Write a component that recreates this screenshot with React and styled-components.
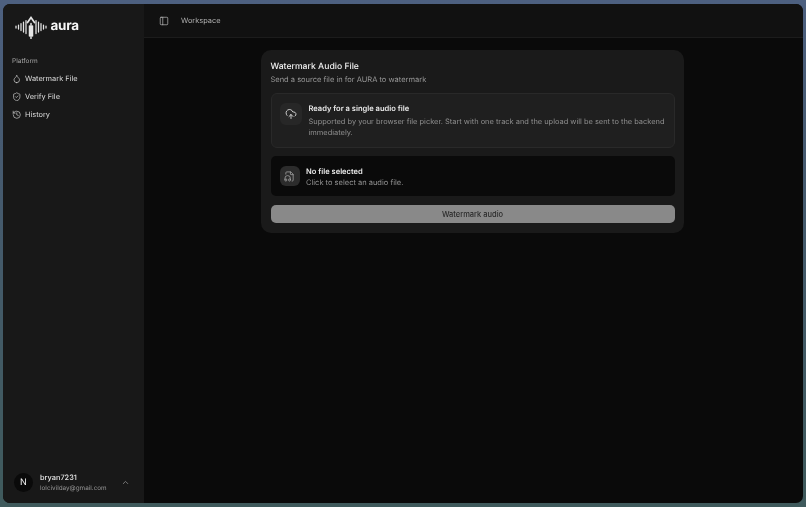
import React from "react";
import styled, { createGlobalStyle } from "styled-components";
import { Droplet, ShieldCheck, History, PanelLeft, CloudUpload, FileAudio, ChevronUp } from "lucide-react";

const Global = createGlobalStyle`
  html, body { margin: 0; padding: 0; background: #3f5560; }
  * { box-sizing: border-box; }
  body { font-family: Inter, "Liberation Sans", sans-serif; text-rendering: geometricPrecision; }
`;

const Desktop = styled.div`
  width: 806px;
  height: 507px;
  padding: 4px 3px 4px 3px;
  background: linear-gradient(180deg, #4d6080 0%, #465a70 30%, #3f5a5c 100%);
  overflow: hidden;
  filter: blur(0.3px);
`;

const Window = styled.div`
  display: flex;
  height: 100%;
  border-radius: 7px;
  overflow: hidden;
  background: #0a0a0a;
`;

const Sidebar = styled.aside`
  display: flex;
  flex-direction: column;
  width: 141px;
  flex: none;
  background: #181818;
`;

const Brand = styled.div`
  display: flex;
  align-items: center;
  gap: 2.5px;
  height: 44px;
  padding: 2px 0 0 11px;
`;

const BrandName = styled.span`
  color: #f6f6f6;
  font-size: 13.4px;
  font-weight: 700;
  letter-spacing: -0.2px;
  line-height: 1;
`;

const SectionLabel = styled.div`
  margin-top: 8px;
  padding-left: 9px;
  color: #a4a4a4;
  font-size: 6.5px;
  line-height: 10px;
`;

const Nav = styled.nav`
  display: flex;
  flex-direction: column;
  margin-top: 4px;
`;

const NavItem = styled.a`
  display: flex;
  align-items: center;
  gap: 4px;
  height: 17.8px;
  padding-left: 8.5px;
  color: #dcdcdc;
  font-size: 7.4px;
  line-height: 1;
  svg { flex: none; }
`;

const UserRow = styled.div`
  display: flex;
  align-items: center;
  margin-top: auto;
  height: 42px;
  padding: 0 14px 0 11px;
`;

const Avatar = styled.div`
  display: flex;
  align-items: center;
  justify-content: center;
  width: 19px;
  height: 19px;
  border-radius: 50%;
  background: #0a0a0a;
  color: #f6f6f6;
  font-size: 9px;
  font-weight: 400;
  flex: none;
`;

const UserText = styled.div`
  display: flex;
  flex-direction: column;
  margin: 2px 0 0 7px;
  flex: 1;
`;

const UserName = styled.div`
  color: #e6e6e6;
  font-size: 7.4px;
  font-weight: 500;
  line-height: 10px;
`;

const UserMail = styled.div`
  color: #969696;
  font-size: 6.35px;
  line-height: 10px;
`;

const Main = styled.main`
  display: flex;
  flex-direction: column;
  flex: 1;
  min-width: 0;
`;

const TopBar = styled.header`
  display: flex;
  align-items: center;
  gap: 12px;
  height: 34px;
  padding-left: 15px;
  background: #111111;
  border-bottom: 1px solid #1c1c1c;
  color: #b2b2b2;
  font-size: 7.4px;
  flex: none;
`;

const Content = styled.div`
  display: flex;
  justify-content: center;
  padding: 12px 2px 0 0;
  flex: 1;
`;

const Card = styled.section`
  display: flex;
  flex-direction: column;
  width: 423px;
  height: 183px;
  padding: 10px 9.5px 0;
  border-radius: 10px;
  background: #1a1a1a;
`;

const Title = styled.h1`
  margin: 1px 0 0;
  color: #efefef;
  font-size: 8.65px;
  font-weight: 500;
  line-height: 12px;
`;

const Subtitle = styled.p`
  margin: 1px 0 0;
  color: #969696;
  font-size: 7.5px;
  line-height: 11px;
`;

const InfoPanel = styled.div`
  display: flex;
  gap: 7px;
  margin-top: 8px;
  height: 55px;
  padding: 9px 8px 0 8px;
  border: 1px solid #292929;
  border-radius: 6px;
  background: #1f1f1f;
`;

const IconTile = styled.div`
  display: flex;
  align-items: center;
  justify-content: center;
  width: ${p => p.$size}px;
  height: ${p => p.$size}px;
  flex: none;
  border-radius: 6px;
  background: ${p => p.$bg};
  color: ${p => p.$fg};
`;

const InfoBody = styled.div`
  display: flex;
  flex-direction: column;
`;

const StrongLine = styled.div`
  color: #eaeaea;
  font-size: 7.55px;
  font-weight: 600;
  line-height: 12px;
`;

const InfoText = styled.div`
  margin-top: 1px;
  color: #8e8e8e;
  font-size: 7.45px;
  line-height: 11px;
`;

const FileRow = styled.div`
  display: flex;
  align-items: center;
  gap: 6.5px;
  margin-top: 8px;
  height: 40px;
  padding-left: 9px;
  border-radius: 5px;
  background: #0a0a0a;
`;

const FileText = styled.div`
  display: flex;
  flex-direction: column;
  margin-top: 2px;
`;

const FileHint = styled.div`
  color: #929292;
  font-size: 7.5px;
  line-height: 10px;
`;

const ActionButton = styled.button`
  display: flex;
  align-items: center;
  justify-content: center;
  height: 18px;
  margin-top: 9px;
  padding: 0;
  border: 0;
  border-radius: 5px;
  background: #898989;
  color: #2a2a2a;
  font-family: inherit;
  font-size: 7.5px;
  font-weight: 500;
`;

const Wave = () => (
  <svg width="34" height="24" viewBox="0 0 34 24" fill="none" stroke="#e4e4e4" strokeLinecap="round" strokeWidth="1.25">
    <path d="M2 11v2M4.5 10v4M7 8.5v7M9.5 7v10M12 5.5v13M22 5.5v13M24.5 7v10M27 8.5v7M29.5 10v4M32 11v2" />
    <path d="M13.5 7.5L17 2.5l3.5 5" strokeWidth="1.7" />
    <path d="M15.5 11v10M17 8.5v15M18.5 11v10" strokeWidth="1.5" />
  </svg>
);

export default function App() {
  return (
    <Desktop>
      <Global />
      <Window>
        <Sidebar>
          <Brand>
            <Wave />
            <BrandName>aura</BrandName>
          </Brand>
          <SectionLabel>Platform</SectionLabel>
          <Nav>
            <NavItem><Droplet size={9.5} strokeWidth={1.6} />Watermark File</NavItem>
            <NavItem><ShieldCheck size={9.5} strokeWidth={1.6} />Verify File</NavItem>
            <NavItem><History size={9.5} strokeWidth={1.6} />History</NavItem>
          </Nav>
          <UserRow>
            <Avatar>N</Avatar>
            <UserText>
              <UserName>bryan7231</UserName>
              <UserMail>lolcivilday@gmail.com</UserMail>
            </UserText>
            <ChevronUp size={9} color="#949494" />
          </UserRow>
        </Sidebar>
        <Main>
          <TopBar>
            <PanelLeft size={10} strokeWidth={1.5} color="#cfcfcf" />
            Workspace
          </TopBar>
          <Content>
            <Card>
              <Title>Watermark Audio File</Title>
              <Subtitle>Send a source file in for AURA to watermark</Subtitle>
              <InfoPanel>
                <IconTile $size={22} $bg="#272727" $fg="#e6e6e6"><CloudUpload size={12} strokeWidth={1.7} /></IconTile>
                <InfoBody>
                  <StrongLine>Ready for a single audio file</StrongLine>
                  <InfoText>Supported by your browser file picker. Start with one track and the upload will be sent to the backend immediately.</InfoText>
                </InfoBody>
              </InfoPanel>
              <FileRow>
                <IconTile $size={20} $bg="#2c2c2c" $fg="#aeaeae"><FileAudio size={11} strokeWidth={1.6} /></IconTile>
                <FileText>
                  <StrongLine>No file selected</StrongLine>
                  <FileHint>Click to select an audio file.</FileHint>
                </FileText>
              </FileRow>
              <ActionButton>Watermark audio</ActionButton>
            </Card>
          </Content>
        </Main>
      </Window>
    </Desktop>
  );
}
